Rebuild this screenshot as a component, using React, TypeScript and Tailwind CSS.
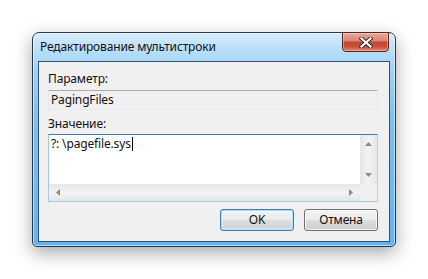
import React from 'react'

const FONT = { fontFamily: '"Noto Sans", "Liberation Sans", sans-serif' }

function Arrow({ dir }: { dir: 'up' | 'down' | 'left' | 'right' }) {
  const pts = {
    up: '0,4 3.5,0 7,4',
    down: '0,0 3.5,4 7,0',
    left: '4,0 0,3.5 4,7',
    right: '0,0 4,3.5 0,7',
  }[dir]
  const vert = dir === 'up' || dir === 'down'
  return (
    <svg width={vert ? 7 : 4} height={vert ? 4 : 7} viewBox={vert ? '0 0 7 4' : '0 0 4 7'}>
      <polygon points={pts} fill="#8a8a8a" />
    </svg>
  )
}

export default function App() {
  return (
    <div className="w-[428px] h-[279px] bg-white pt-[32px] pl-[32px] overflow-hidden tracking-[-0.15px]" style={FONT}>
      {/* Window */}
      <div className="relative w-[364px] h-[215px] flex flex-col rounded-t-[7px] rounded-b-[5px] border border-[#22364d] bg-[linear-gradient(to_bottom,#d6ecfc_0px,#b4dcf8_20px,#9cd0f6_40px,#78c0f4_90px,#5fb5f4_100%)] shadow-[0_6px_18px_rgba(0,0,0,0.35),inset_0_0_0_1px_rgba(255,255,255,0.55)]">
        {/* Title bar */}
        <div className="h-[28px] flex items-center pl-[7px] text-[12px] text-[#111]">
          Редактирование мультистроки
        </div>

        {/* Close button */}
        <div className="absolute -top-px right-[6px] w-[47px] h-[20px] rounded-b-[4px] border border-[#5a2318] bg-[linear-gradient(to_bottom,#e8a89c_0%,#d98474_45%,#c4452f_50%,#c9503a_75%,#e08a70_100%)] shadow-[inset_0_0_0_1px_rgba(255,255,255,0.35)] flex items-center justify-center">
          <svg width="14" height="11" viewBox="0 0 14 11">
            <path d="M2.5 1.5 L11.5 9.5 M11.5 1.5 L2.5 9.5" stroke="#3a2a28" strokeWidth="4.2" strokeLinecap="square" />
            <path d="M2.5 1.5 L11.5 9.5 M11.5 1.5 L2.5 9.5" stroke="#ffffff" strokeWidth="2.2" strokeLinecap="square" />
          </svg>
        </div>

        {/* Client area */}
        <div className="flex-1 ml-[5px] mr-[5px] mb-[4px] border border-[#34506e] bg-[#f0f0f0] flex flex-col pl-[9px] text-[12px] text-[#111]">
          <div className="mt-[9px] h-[16px] leading-[16px]">Параметр:</div>
          <div className="mt-[3px] w-[330px] h-[20px] border border-[#e3e9ef] border-t-[#abadb3] bg-[#f0f0f0] pl-[2px] leading-[17px]">
            PagingFiles
          </div>
          <div className="mt-[6px] h-[16px] leading-[16px]">Значение:</div>

          {/* Multiline box */}
          <div className="mt-[2px] w-[330px] h-[68px] border border-[#a4c9e3] border-t-[#3d7bad] border-r-[#b5d5f0] bg-white flex flex-col">
            <div className="flex flex-1">
              <div className="flex-1 pl-[2px] pt-px leading-[16px] flex items-start">
                <span>?: \pagefile.sys</span>
                <span className="w-px h-[14px] bg-black mt-px ml-px" />
              </div>
              <div className="w-[17px] bg-[linear-gradient(to_right,#e6e6e6,#f3f3f3_50%,#e6e6e6)] flex flex-col items-center justify-between py-[7px]">
                <Arrow dir="up" />
                <Arrow dir="down" />
              </div>
            </div>
            <div className="h-[17px] flex">
              <div className="flex-1 bg-[linear-gradient(to_bottom,#e6e6e6,#f3f3f3_50%,#e6e6e6)] flex items-center justify-between px-[7px]">
                <Arrow dir="left" />
                <Arrow dir="right" />
              </div>
              <div className="w-[17px] bg-[#f0f0f0]" />
            </div>
          </div>

          {/* Buttons */}
          <div className="mt-[7px] w-[330px] flex justify-end gap-[10px]">
            <div className="w-[74px] h-[22px] rounded-[3px] border border-[#3c7fb1] bg-[linear-gradient(to_bottom,#f2f2f2_0%,#ebebeb_50%,#dddddd_51%,#cfcfcf_100%)] shadow-[inset_0_0_0_1px_#a9ddf7,inset_0_0_0_2px_rgba(255,255,255,0.4)] flex items-center justify-center">
              OK
            </div>
            <div className="w-[74px] h-[22px] rounded-[3px] border border-[#707070] bg-[linear-gradient(to_bottom,#f2f2f2_0%,#ebebeb_50%,#dddddd_51%,#cfcfcf_100%)] shadow-[inset_0_0_0_1px_rgba(255,255,255,0.7)] flex items-center justify-center">
              Отмена
            </div>
          </div>
        </div>
      </div>
    </div>
  )
}
